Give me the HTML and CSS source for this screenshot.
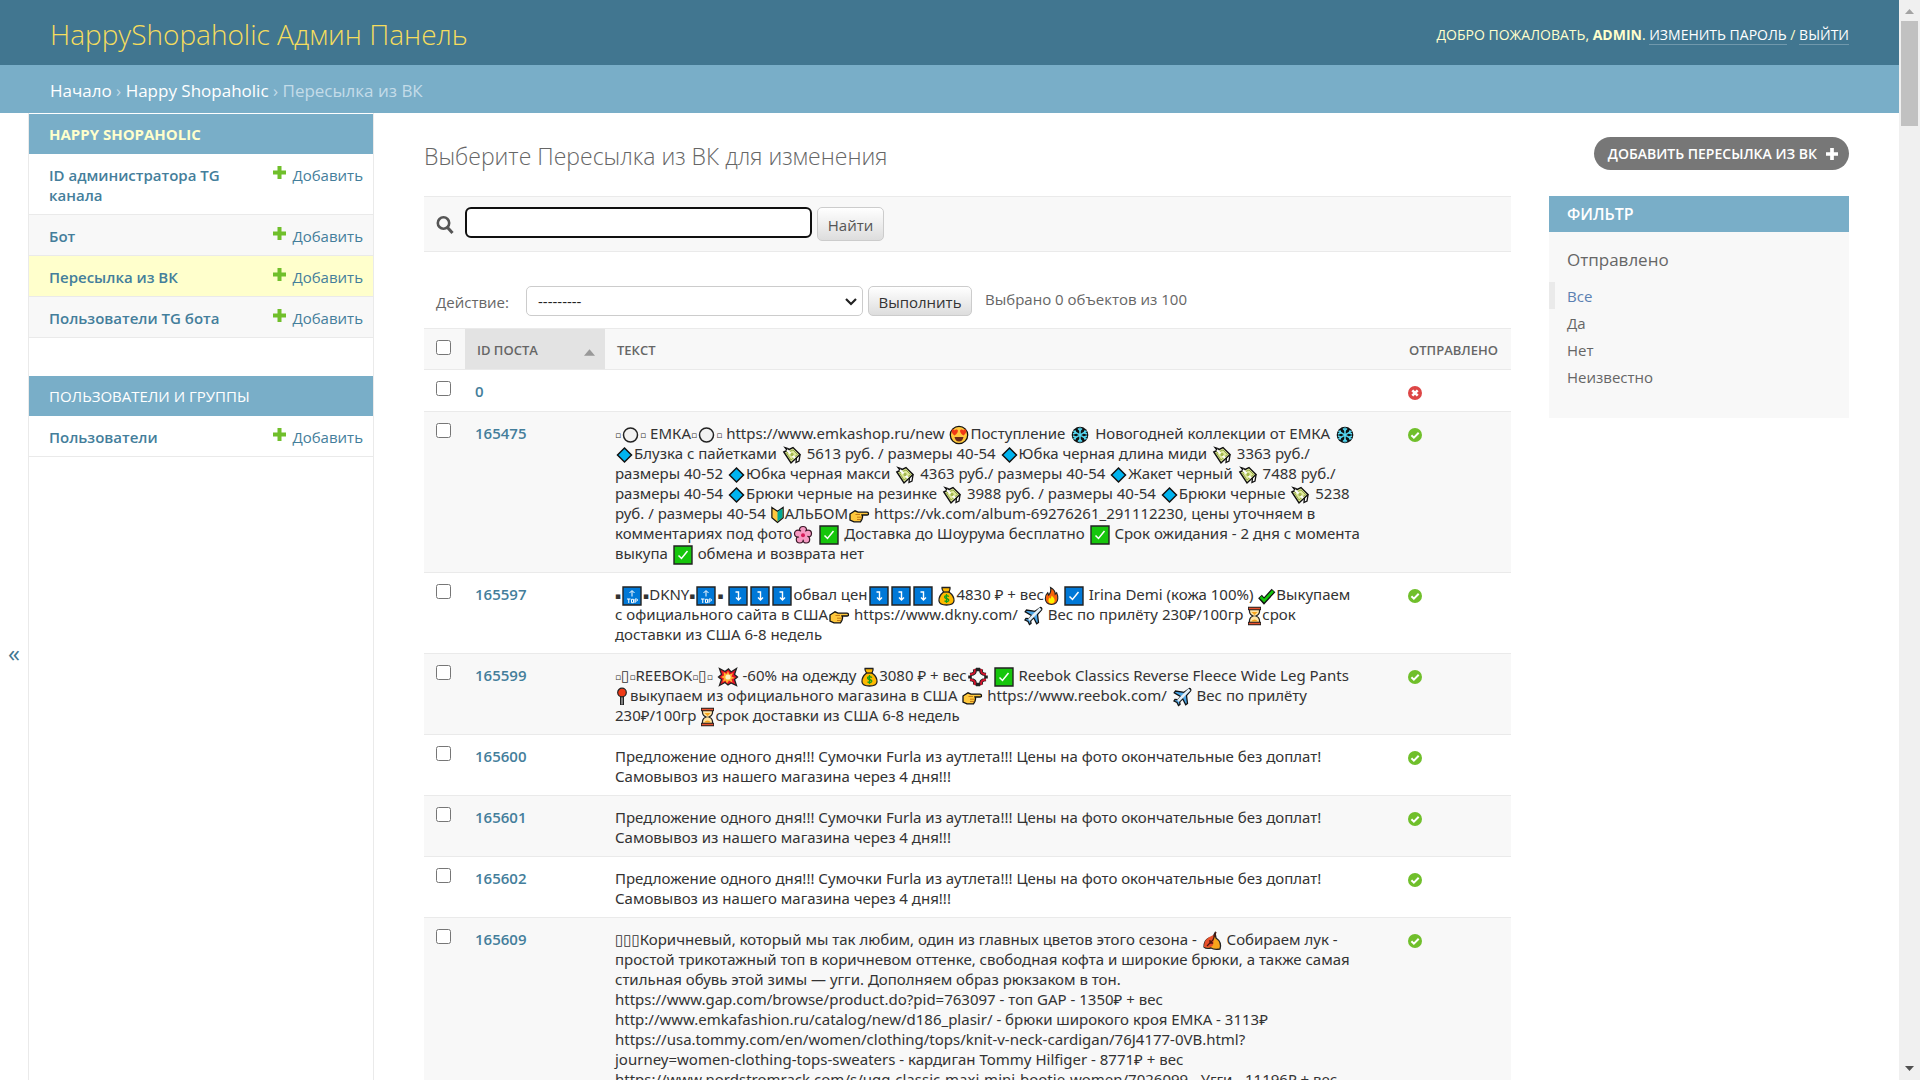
FILE: index.html
```html
<!DOCTYPE html>
<html lang="ru">
<head>
<meta charset="utf-8">
<title>Выберите Пересылка из ВК для изменения</title>
<link rel="stylesheet" href="styles.css">
</head>
<body>
<svg class="sprite" aria-hidden="true">
  <symbol id="plus" viewBox="0 0 13 13"><path d="M4.500 0h4v4.500H13v4H8.500V13h-4V8.500H0v-4h4.500z" fill="currentColor"/></symbol>
  <symbol id="yes" viewBox="0 0 14 14"><circle cx="7" cy="7" r="7" fill="#70bf2b"/><path d="M3.400 7.200l2.500 2.500 4.800-4.900" fill="none" stroke="#fff" stroke-width="2"/></symbol>
  <symbol id="no" viewBox="0 0 14 14"><circle cx="7" cy="7" r="7" fill="#dd4646"/><path d="M4.300 4.300l5.400 5.400M9.700 4.300l-5.400 5.400" stroke="#fff" stroke-width="2.600"/></symbol>
  <symbol id="circle" viewBox="0 0 18 20"><circle cx="9" cy="10" r="7" fill="#f2f2f2" stroke="#222" stroke-width="1.500"/></symbol>
  <symbol id="love" viewBox="0 0 22 20"><circle cx="11" cy="10" r="8.700" fill="#ffc83d" stroke="#111" stroke-width="1.300"/><path d="M6.500 10.500C3 8 3 4 5.200 4.200q1 0 1.500 1.200Q7.500 4 9 4.600c2 .8.500 4.400-2.500 5.900zM15.500 10.500C12.500 9 11 5.400 13 4.600q1.500-.6 2.300.8.500-1.200 1.500-1.200C19 4 19 8 15.500 10.500z" fill="#f03a17"/><path d="M6.500 12h9q-1 4.500-4.500 4.500T6.500 12z" fill="#6b2b1a"/></symbol>
  <symbol id="snow" viewBox="0 0 22 20"><circle cx="11" cy="10" r="8.300" fill="#111"/><g stroke="#55d8f2" stroke-width="1.500" fill="none"><path d="M11 2.500v15M4.500 6.200l13 7.600M17.500 6.200l-13 7.600"/><path d="M9 3.500l2 2 2-2M9 16.500l2-2 2 2M4 9l2.600-1-.6-2.600M18 9l-2.600-1 .6-2.600M4 11l2.600 1-.6 2.600M18 11l-2.600 1 .6 2.600"/></g></symbol>
  <symbol id="diamond" viewBox="0 0 18 20"><path d="M9 3l7 7-7 7-7-7z" fill="#00b4f0" stroke="#111" stroke-width="1.500"/></symbol>
  <symbol id="money" viewBox="0 0 22 20"><path d="M4 2.500l3 1 2 2-3-.4zM16 8l3 2-1 6-3 1.500z" fill="#fff" stroke="#111" stroke-width="1.300"/><path d="M2.800 7L12 2.500l7 7L10 18z" fill="#dfe89a" stroke="#111" stroke-width="1.400"/><path d="M5.500 8L12 5l4.500 4.500L10 15z" fill="none" stroke="#93aa46" stroke-width="1"/><path d="M6 5l8 8" stroke="#fff" stroke-width="2"/><circle cx="11" cy="9.500" r="1.700" fill="#a4b951"/></symbol>
  <symbol id="beginner" viewBox="0 0 16 20"><path d="M2 2l6 4 6-4v11l-6 5-6-5z" fill="#ffc83d" stroke="#111" stroke-width="1.300"/><path d="M8 6.500l5.300-3.400v9.600L8 17z" fill="#00a896"/></symbol>
  <symbol id="point" viewBox="0 0 22 20"><path d="M2 9l5-3.200 3 1.400h9q1.500.1 1.500 1.500T19 10h-5l.6 1.800-.6 2.400-1.500 2.600H6L2 15z" fill="#ffc83d" stroke="#111" stroke-width="1.300"/><path d="M7.500 9.500H12M9 12.200h5M9 14.500h4" stroke="#c47b16" stroke-width="1"/></symbol>
  <symbol id="flower" viewBox="0 0 22 20"><g fill="#f59ac3" stroke="#3a1727" stroke-width="1.200"><circle cx="11" cy="5" r="3.500"/><circle cx="16" cy="8.600" r="3.500"/><circle cx="14.200" cy="14.500" r="3.500"/><circle cx="7.800" cy="14.500" r="3.500"/><circle cx="6" cy="8.600" r="3.500"/></g><circle cx="11" cy="10.300" r="4.500" fill="#f59ac3"/><circle cx="11" cy="10.300" r="2" fill="#d61a59"/></symbol>
  <symbol id="check-green" viewBox="0 0 22 20"><path d="M2 1h18v18H2z" fill="#16c60c" stroke="#222" stroke-width="1.400"/><path d="M6.500 10.500l3 3L15.500 6" fill="none" stroke="#fff" stroke-width="1.500"/></symbol>
  <symbol id="check-blue" viewBox="0 0 22 20"><path d="M2 1h18v18H2z" fill="#0078d7" stroke="#222" stroke-width="1.400"/><path d="M6.500 10.500l3 3L15.500 6" fill="none" stroke="#fff" stroke-width="1.500"/></symbol>
  <symbol id="top" viewBox="0 0 22 20"><path d="M2 1h18v18H2z" fill="#0078d7" stroke="#222" stroke-width="1.400"/><path d="M11 10.500V5M8.500 7L11 4.500 13.500 7M6 13h3.500M7.750 13v4M14 17v-4h1.500q1 0 1 1t-1 1H14M10.500 13.300h2v3.400h-2z" fill="none" stroke="#fff" stroke-width="1"/></symbol>
  <symbol id="down" viewBox="0 0 22 20"><path d="M2 1h18v18H2z" fill="#0078d7" stroke="#222" stroke-width="1.400"/><path d="M8.500 6h3v7.500M9 11.500l2.500 2.500 2.500-2.500" fill="none" stroke="#fff" stroke-width="1.400"/></symbol>
  <symbol id="bag" viewBox="0 0 18 20"><path d="M6 6Q4 3 4.500 1.500h8Q13 3 11.500 6 17 10 16.500 15q-.5 4-7.500 4t-7.500-4Q1 10 6 6z" fill="#ffb900" stroke="#222" stroke-width="1.300"/><path d="M5.500 6h6.500" stroke="#222" stroke-width="1.300"/><path d="M11.500 10.500Q9 8.800 7.300 10.200q-.8 1.600 1.700 2.300t2.200 2q-.9 1.800-4.200.3M9 8v9" fill="none" stroke="#16a016" stroke-width="1.300"/></symbol>
  <symbol id="fire" viewBox="0 0 16 20"><path d="M7 1q5 3 5 7l1.500-1.500Q15 10 14.700 13q-.5 6-6.700 6t-6.600-6Q1.400 9 4 6.500L5 9q3-3.500 2-8z" fill="#f7630c" stroke="#222" stroke-width="1.200"/><path d="M8 9.500q4 3.500 3.300 6-.6 2.500-3.300 2.500t-3.300-2.500Q4.500 13 6 11.500l1 1.300q1-1.500 1-3.300z" fill="#fff100"/></symbol>
  <symbol id="check-heavy" viewBox="0 0 19 20"><path d="M3 10.500l4 4.500L16.500 4.500" fill="none" stroke="#111" stroke-width="5"/><path d="M3.600 11l3.500 3.700L16 5" fill="none" stroke="#16c60c" stroke-width="2.600"/></symbol>
  <symbol id="plane" viewBox="0 0 22 20"><path d="M18.500 1.500q2 .5 1 2.500l-4 4.500 1 8-1.800 1.300-3-6-3 3 .3 2.700-1.500 1-1.500-3-3-1.500 1-1.500 2.800.2 3-3-6.600-4L4.500 4l8.500 1.300z" fill="#4ba3e3" stroke="#111" stroke-width="1.300"/><path d="M18.500 2.500L7 14" stroke="#e3eef7" stroke-width="2.600"/></symbol>
  <symbol id="hourglass" viewBox="0 0 15 20"><path d="M2.500 3h10v3Q12 9 9 10q3 1 3.500 4v3h-10v-3Q3 11 6 10 3 9 2.500 6z" fill="#ffe4a3" stroke="#222" stroke-width="1.200"/><path d="M4 15.500q3.500-4 7 0zM4.500 6h6l-3 3z" fill="#f7a51b"/><path d="M1 2.500h13M1 17.500h13" stroke="#222" stroke-width="3.400"/><path d="M1.800 2.500h11.400M1.800 17.500h11.400" stroke="#e8502b" stroke-width="1.600"/></symbol>
  <symbol id="boom" viewBox="0 0 22 20"><path d="M2.500 1.500L8 4.500 11.500 2l2.500 3 5.500-3.500-2 6 3 2.500-3 2.500 2 6-5.500-2.500L11 18l-3-2.500-5.500 3 2-6-3-2.500 3-2.500z" fill="#e81224" stroke="#222" stroke-width="1.300"/><path d="M11 4l1.500 3.500L16 6l-1.500 3.500L18 11l-3.500 1 1 3.500-3.500-2-2 3-1.500-3-3 1.500L7 11.500 4 10l3-1.500L6.500 5l3 2z" fill="#ffb02e"/><circle cx="11" cy="10" r="2.600" fill="#fff3c4"/></symbol>
  <symbol id="anger" viewBox="0 0 21 20"><g fill="none" stroke="#222" stroke-width="3.600"><path d="M7 2q2 5-4.500 5.500M14 2q-2 5 4.500 5.500M2.500 12.500Q9 13 7 18M18.500 12.500Q12 13 14 18M8.500 2.500h4M8.500 17.500h4M2.500 8.500v3M18.500 8.500v3"/></g><g fill="none" stroke="#d3142d" stroke-width="1.800"><path d="M7 2q2 5-4.500 5.500M14 2q-2 5 4.500 5.500M2.500 12.500Q9 13 7 18M18.500 12.500Q12 13 14 18"/></g></symbol>
  <symbol id="pin" viewBox="0 0 13 20"><path d="M6 9v9" stroke="#222" stroke-width="4"/><path d="M6 9v8.500" stroke="#aaa" stroke-width="1.400"/><circle cx="6" cy="5.500" r="4.300" fill="#f03a17" stroke="#222" stroke-width="1.200"/></symbol>
  <symbol id="leaf" viewBox="0 0 22 20"><path d="M14 2l1 5q6 4 4 11-6 1-9-1-5 1-7-1 0-7 5-9l3 .5z" fill="#f7a51b" stroke="#222" stroke-width="1.300"/><path d="M12.500 4Q3 7 3 16q8 2 9.500-3.500z" fill="#e8502b"/><path d="M15 1l-3 8-6 6M9 9v3h3" fill="none" stroke="#4c160f" stroke-width="1.300"/></symbol>
</svg>
<div class="window">
  <div class="page">
    <header class="header">
      <a class="brand" href="#">HappyShopaholic Админ Панель</a>
      <div class="user-tools">Добро пожаловать, <strong>admin</strong>. <a href="#">Изменить пароль</a> / <a href="#">Выйти</a></div>
    </header>
    <nav class="breadcrumbs"><a href="#">Начало</a> › <a href="#">Happy Shopaholic</a> › Пересылка из ВК</nav>
    <div class="main">
      <button class="sidebar-toggle" aria-label="Свернуть навигацию">«</button>
      <nav class="sidebar">
        <section class="module">
          <h2 class="current"><a href="#">Happy Shopaholic</a></h2>
          <div class="model"><a class="name" href="#">ID администратора TG канала</a><a class="add" href="#"><svg><use href="#plus"/></svg>Добавить</a></div>
          <div class="model alt"><a class="name" href="#">Бот</a><a class="add" href="#"><svg><use href="#plus"/></svg>Добавить</a></div>
          <div class="model active"><a class="name" href="#">Пересылка из ВК</a><a class="add" href="#"><svg><use href="#plus"/></svg>Добавить</a></div>
          <div class="model alt"><a class="name" href="#">Пользователи TG бота</a><a class="add" href="#"><svg><use href="#plus"/></svg>Добавить</a></div>
        </section>
        <section class="module">
          <h2><a href="#">Пользователи и группы</a></h2>
          <div class="model"><a class="name" href="#">Пользователи</a><a class="add" href="#"><svg><use href="#plus"/></svg>Добавить</a></div>
        </section>
      </nav>
      <main class="content">
        <div class="title-row">
          <h1>Выберите Пересылка из ВК для изменения</h1>
          <a class="add-object" href="#">Добавить Пересылка из ВК <svg><use href="#plus"/></svg></a>
        </div>
        <div class="columns">
          <div class="changelist">
            <form class="toolbar">
              <label for="searchbar" aria-label="Поиск"><svg viewBox="0 0 18 20"><circle cx="7.500" cy="8" r="5.700" fill="none" stroke="#555" stroke-width="2.600"/><path d="M11.500 12.500l5 5.500" stroke="#555" stroke-width="3"/></svg></label>
              <input id="searchbar" type="text">
              <button type="button" class="button search-button">Найти</button>
            </form>
            <form class="actions">
              <label for="action">Действие:</label>
              <span class="select"><select id="action"><option>---------</option></select><svg viewBox="0 0 12 8"><path d="M1 1l5 5 5-5" fill="none" stroke="#222" stroke-width="2.200"/></svg></span>
              <button type="button" class="button run-button">Выполнить</button>
              <span class="counter">Выбрано 0 объектов из 100</span>
            </form>
            <table>
              <thead><tr>
                <th class="check"><input type="checkbox" aria-label="Выбрать все"></th>
                <th class="sorted"><a href="#">ID поста</a><svg viewBox="0 0 10 6"><path d="M5 0l5 6H0z" fill="#999"/></svg></th>
                <th class="text">Текст</th>
                <th class="sent">Отправлено</th>
              </tr></thead>
              <tbody>
              <tr><td><input type="checkbox" aria-label="0"></td><th><a href="#">0</a></th><td></td><td><svg class="flag" role="img" aria-label="Нет"><use href="#no"/></svg></td></tr>
              <tr><td><input type="checkbox" aria-label="165475"></td><th><a href="#">165475</a></th><td><i>▫</i><svg class="e w19"><use href="#circle"/></svg><i>▫</i> ЕМКА<i>▫</i><svg class="e w19"><use href="#circle"/></svg><i>▫</i> https://www.emkashop.ru/new <svg class="e"><use href="#love"/></svg>Поступление <svg class="e"><use href="#snow"/></svg> Новогодней коллекции от ЕМКА <svg class="e"><use href="#snow"/></svg><br>
<svg class="e w19"><use href="#diamond"/></svg>Блузка с пайетками <svg class="e"><use href="#money"/></svg> 5613 руб. / размеры 40-54 <svg class="e w19"><use href="#diamond"/></svg>Юбка черная длина миди <svg class="e"><use href="#money"/></svg> 3363 руб./<br>
размеры 40-52 <svg class="e w19"><use href="#diamond"/></svg>Юбка черная макси <svg class="e"><use href="#money"/></svg> 4363 руб./ размеры 40-54 <svg class="e w19"><use href="#diamond"/></svg>Жакет черный <svg class="e"><use href="#money"/></svg> 7488 руб./<br>
размеры 40-54 <svg class="e w19"><use href="#diamond"/></svg>Брюки черные на резинке <svg class="e"><use href="#money"/></svg> 3988 руб. / размеры 40-54 <svg class="e w19"><use href="#diamond"/></svg>Брюки черные <svg class="e"><use href="#money"/></svg> 5238<br>
руб. / размеры 40-54 <svg class="e w15"><use href="#beginner"/></svg>АЛЬБОМ<svg class="e"><use href="#point"/></svg> https://vk.com/album-69276261_291112230, цены уточняем в<br>
комментариях под фото<svg class="e"><use href="#flower"/></svg> <svg class="e"><use href="#check-green"/></svg> Доставка до Шоурума бесплатно <svg class="e"><use href="#check-green"/></svg> Срок ожидания - 2 дня с момента<br>
выкупа <svg class="e"><use href="#check-green"/></svg> обмена и возврата нет</td><td><svg class="flag" role="img" aria-label="Да"><use href="#yes"/></svg></td></tr>
              <tr><td><input type="checkbox" aria-label="165597"></td><th><a href="#">165597</a></th><td><i>▪</i><svg class="e"><use href="#top"/></svg><i>▪</i>DKNY<i>▪</i><svg class="e"><use href="#top"/></svg><i>▪</i> <svg class="e"><use href="#down"/></svg><svg class="e"><use href="#down"/></svg><svg class="e"><use href="#down"/></svg>обвал цен<svg class="e"><use href="#down"/></svg><svg class="e"><use href="#down"/></svg><svg class="e"><use href="#down"/></svg> <svg class="e w19"><use href="#bag"/></svg>4830 ₽ + вес<svg class="e w15"><use href="#fire"/></svg> <svg class="e"><use href="#check-blue"/></svg> Irina Demi (кожа 100%) <svg class="e w19"><use href="#check-heavy"/></svg>Выкупаем<br>
с официального сайта в США<svg class="e"><use href="#point"/></svg> https://www.dkny.com/ <svg class="e"><use href="#plane"/></svg> Вес по прилёту 230₽/100гр <svg class="e w15"><use href="#hourglass"/></svg>срок<br>
доставки из США 6-8 недель</td><td><svg class="flag" role="img" aria-label="Да"><use href="#yes"/></svg></td></tr>
              <tr><td><input type="checkbox" aria-label="165599"></td><th><a href="#">165599</a></th><td><i>▫</i><b>▯</b><i>▫</i>REEBOK<i>▫</i><b>▯</b><i>▫</i> <svg class="e"><use href="#boom"/></svg> -60% на одежду <svg class="e w19"><use href="#bag"/></svg>3080 ₽ + вес<svg class="e"><use href="#anger"/></svg> <svg class="e"><use href="#check-green"/></svg> Reebok Classics Reverse Fleece Wide Leg Pants<br>
<svg class="e w15"><use href="#pin"/></svg>выкупаем из официального магазина в США <svg class="e"><use href="#point"/></svg> https://www.reebok.com/ <svg class="e"><use href="#plane"/></svg> Вес по прилёту<br>
230₽/100гр <svg class="e w15"><use href="#hourglass"/></svg>срок доставки из США 6-8 недель</td><td><svg class="flag" role="img" aria-label="Да"><use href="#yes"/></svg></td></tr>
              <tr><td><input type="checkbox" aria-label="165600"></td><th><a href="#">165600</a></th><td>Предложение одного дня!!! Сумочки Furla из аутлета!!! Цены на фото окончательные без доплат!<br>Самовывоз из нашего магазина через 4 дня!!!</td><td><svg class="flag" role="img" aria-label="Да"><use href="#yes"/></svg></td></tr>
              <tr><td><input type="checkbox" aria-label="165601"></td><th><a href="#">165601</a></th><td>Предложение одного дня!!! Сумочки Furla из аутлета!!! Цены на фото окончательные без доплат!<br>Самовывоз из нашего магазина через 4 дня!!!</td><td><svg class="flag" role="img" aria-label="Да"><use href="#yes"/></svg></td></tr>
              <tr><td><input type="checkbox" aria-label="165602"></td><th><a href="#">165602</a></th><td>Предложение одного дня!!! Сумочки Furla из аутлета!!! Цены на фото окончательные без доплат!<br>Самовывоз из нашего магазина через 4 дня!!!</td><td><svg class="flag" role="img" aria-label="Да"><use href="#yes"/></svg></td></tr>
              <tr><td><input type="checkbox" aria-label="165609"></td><th><a href="#">165609</a></th><td><b>▯▯▯</b>Коричневый, который мы так любим, один из главных цветов этого сезона - <svg class="e"><use href="#leaf"/></svg> Собираем лук -<br>
простой трикотажный топ в коричневом оттенке, свободная кофта и широкие брюки, а также самая<br>
стильная обувь этой зимы — угги. Дополняем образ рюкзаком в тон.<br>
https://www.gap.com/browse/product.do?pid=763097 - топ GAP - 1350₽ + вес<br>
http://www.emkafashion.ru/catalog/new/d186_plasir/ - брюки широкого кроя ЕМКА - 3113₽<br>
https://usa.tommy.com/en/women/clothing/tops/knit-v-neck-cardigan/76J4177-0VB.html?<br>
journey=women-clothing-tops-sweaters - кардиган Tommy Hilfiger - 8771₽ + вес<br>
https://www.nordstromrack.com/s/ugg-classic-maxi-mini-bootie-women/7026099 - Угги - 11196₽ + вес</td><td><svg class="flag" role="img" aria-label="Да"><use href="#yes"/></svg></td></tr>
              </tbody>
            </table>
          </div>
          <aside class="filter">
            <h2>Фильтр</h2>
            <h3>Отправлено</h3>
            <ul>
              <li class="selected"><a href="#">Все</a></li>
              <li><a href="#">Да</a></li>
              <li><a href="#">Нет</a></li>
              <li><a href="#">Неизвестно</a></li>
            </ul>
          </aside>
        </div>
      </main>
    </div>
  </div>
  <div class="scrollbar" aria-hidden="true">
    <svg viewBox="0 0 9 5"><path d="M4.500 0L9 5H0z" fill="#a3a3a3"/></svg>
    <div class="thumb"></div>
    <svg viewBox="0 0 9 5"><path d="M0 0h9L4.500 5z" fill="#505050"/></svg>
  </div>
</div>
</body>
</html>
```
FILE: styles.css
```css
* { box-sizing: border-box; }
body {
  margin: 0;
  font: 15px/20px "Open Sans", "Noto Sans", "DejaVu Sans", sans-serif;
  color: #333;
  background: #fff;
}
a { color: #447e9b; text-decoration: none; }
h1, h2, h3, ul { margin: 0; padding: 0; font-weight: 400; }
ul { list-style: none; }
button, input, select { font: inherit; margin: 0; }
.sprite { display: none; }

.window { display: grid; grid-template-columns: minmax(0, 1fr) 21px; height: 100vh; }
.page { display: flex; flex-direction: column; overflow: hidden; }

.header {
  flex: none;
  display: flex;
  align-items: center;
  justify-content: space-between;
  padding: 14px 50px 10px;
  background: #417690;
  color: #ffc;
}
.brand { font-size: 28px; line-height: 41px; font-weight: 300; color: #f5dd5d; }
.user-tools { font-size: 14px; text-transform: uppercase; }
.user-tools a { color: #fff; border-bottom: 1px solid rgba(255, 255, 255, .25); }

.breadcrumbs {
  flex: none;
  padding: 14px 50px 10px;
  font-size: 17px;
  line-height: 24px;
  background: #79aec8;
  color: #c4dce8;
}
.breadcrumbs a { color: #fff; }

.main { flex: 1; display: flex; min-height: 0; }
.sidebar-toggle {
  flex: none;
  width: 28px;
  padding: 112px 0 0;
  border: 0;
  background: #fff;
  color: #417690;
  font-size: 24px;
}
.sidebar {
  flex: none;
  width: 346px;
  padding-top: 1px;
  border: solid #eaeaea;
  border-width: 0 1px;
}
.module { margin-bottom: 38px; }
.module h2 {
  padding: 10px 20px;
  font-size: 15px;
  text-transform: uppercase;
  background: #79aec8;
}
.module h2 a { color: #fff; }
.module h2.current a { color: #ffc; font-weight: 700; }
.model {
  display: flex;
  justify-content: space-between;
  padding: 11px 10px 9px 20px;
  border-bottom: 1px solid #eaeaea;
}
.model.alt { background: #f8f8f8; }
.model.active { background: #ffc; }
.name { width: 200px; font-weight: 600; }
.add svg { width: 13px; height: 13px; margin-right: 6px; color: #70bf2b; vertical-align: 2px; }

.content { flex: 1; min-width: 0; padding: 24px 50px 0; }
.title-row { display: flex; justify-content: space-between; align-items: flex-start; height: 59px; }
h1 { font-size: 23px; line-height: 38px; font-weight: 300; color: #666; }
.add-object {
  display: flex;
  align-items: center;
  gap: 9px;
  height: 33px;
  padding: 0 11px 0 14px;
  border-radius: 17px;
  background: #777;
  color: #fff;
  font-size: 14px;
  font-weight: 600;
  text-transform: uppercase;
}
.add-object svg { width: 12px; height: 12px; }

.columns { display: flex; align-items: flex-start; gap: 38px; }
.changelist { flex: 1; min-width: 0; }
.toolbar {
  display: flex;
  gap: 5px;
  height: 56px;
  padding: 10px 12px;
  border: solid #eaeaea;
  border-width: 1px 0;
  background: #f8f8f8;
}
.toolbar label { width: 24px; padding-top: 8px; }
.toolbar label svg { width: 18px; height: 20px; }
.toolbar input {
  width: 347px;
  height: 31px;
  border: 2px solid #101010;
  border-radius: 6px;
  outline: 0;
  background: #fff;
}
.button {
  border: 1px solid #ccc;
  border-radius: 5px;
  background: linear-gradient(#fff, #ddd);
  color: #333;
}
.search-button { width: 67px; height: 34px; padding: 2px 0 0; color: #555; }
.actions {
  display: flex;
  align-items: center;
  gap: 5px;
  height: 30px;
  margin: 34px 0 12px;
  padding-left: 12px;
  color: #666;
}
.actions label { width: 85px; padding-top: 2px; }
.select { position: relative; width: 337px; }
.select select {
  appearance: none;
  width: 100%;
  height: 30px;
  padding: 0 11px;
  border: 1px solid #ccc;
  border-radius: 5px;
  background: #fff;
  color: #222;
}
.select svg { position: absolute; right: 6px; top: 12px; width: 12px; height: 8px; pointer-events: none; }
.run-button { width: 104px; height: 30px; padding: 2px 0 0; }
.counter { padding: 0 0 4px 8px; }

table { width: 100%; table-layout: fixed; border-collapse: collapse; }
thead tr { background: #f8f8f8; border-top: 1px solid #eaeaea; }
tr { border-bottom: 1px solid #eaeaea; }
tbody tr:nth-child(even) { background: #f8f8f8; }
th, td { height: 41px; padding: 11px 10px 9px; text-align: left; vertical-align: top; white-space: nowrap; }
thead th { color: #666; font-size: 13px; font-weight: 600; text-transform: uppercase; padding-left: 12px; }
thead a { color: #666; }
tbody td { height: 42px; font-family: "Noto Sans", "DejaVu Sans", sans-serif; }
tbody th { font-weight: 600; }
.check { width: 41px; }
.sorted { width: 140px; background: #e3e3e3; }
.sorted svg { float: right; width: 11px; height: 7px; margin-top: 9px; }
.sent { width: 114px; }
input[type="checkbox"] { display: block; width: 15px; height: 15px; margin: 0 0 0 2px; }
thead .check { padding-left: 10px; }
.flag { width: 14px; height: 14px; margin: 5px 0 0 1px; display: block; }

.e { width: 22px; height: 20px; margin: -3px 0; vertical-align: -3px; }
.e.w19 { width: 19px; }
.e.w15 { width: 15px; }
td i, td b { font: 9px/10px "DejaVu Sans", sans-serif; vertical-align: 1px; }
td b { font-size: 15px; vertical-align: 0; }

.filter { flex: none; width: 300px; padding-bottom: 28px; background: #f8f8f8; }
.filter h2 { padding: 8px 18px; font-size: 16px; font-weight: 600; text-transform: uppercase; color: #fff; background: #79aec8; }
.filter h3 { padding: 18px 18px 12px; font-size: 17px; color: #666; }
.filter li { padding: 4px 12px 3px; border-left: 6px solid transparent; }
.filter li a { color: #666; }
.filter .selected { border-color: #eaeaea; }
.filter .selected a { color: #5b80b2; }

.scrollbar {
  display: flex;
  flex-direction: column;
  align-items: center;
  padding: 9px 0;
  background: #f0f0f0;
}
.scrollbar svg { width: 9px; height: 5px; }
.thumb { width: 17px; height: 105px; margin: 7px 0 auto; background: #c1c1c1; }
```
